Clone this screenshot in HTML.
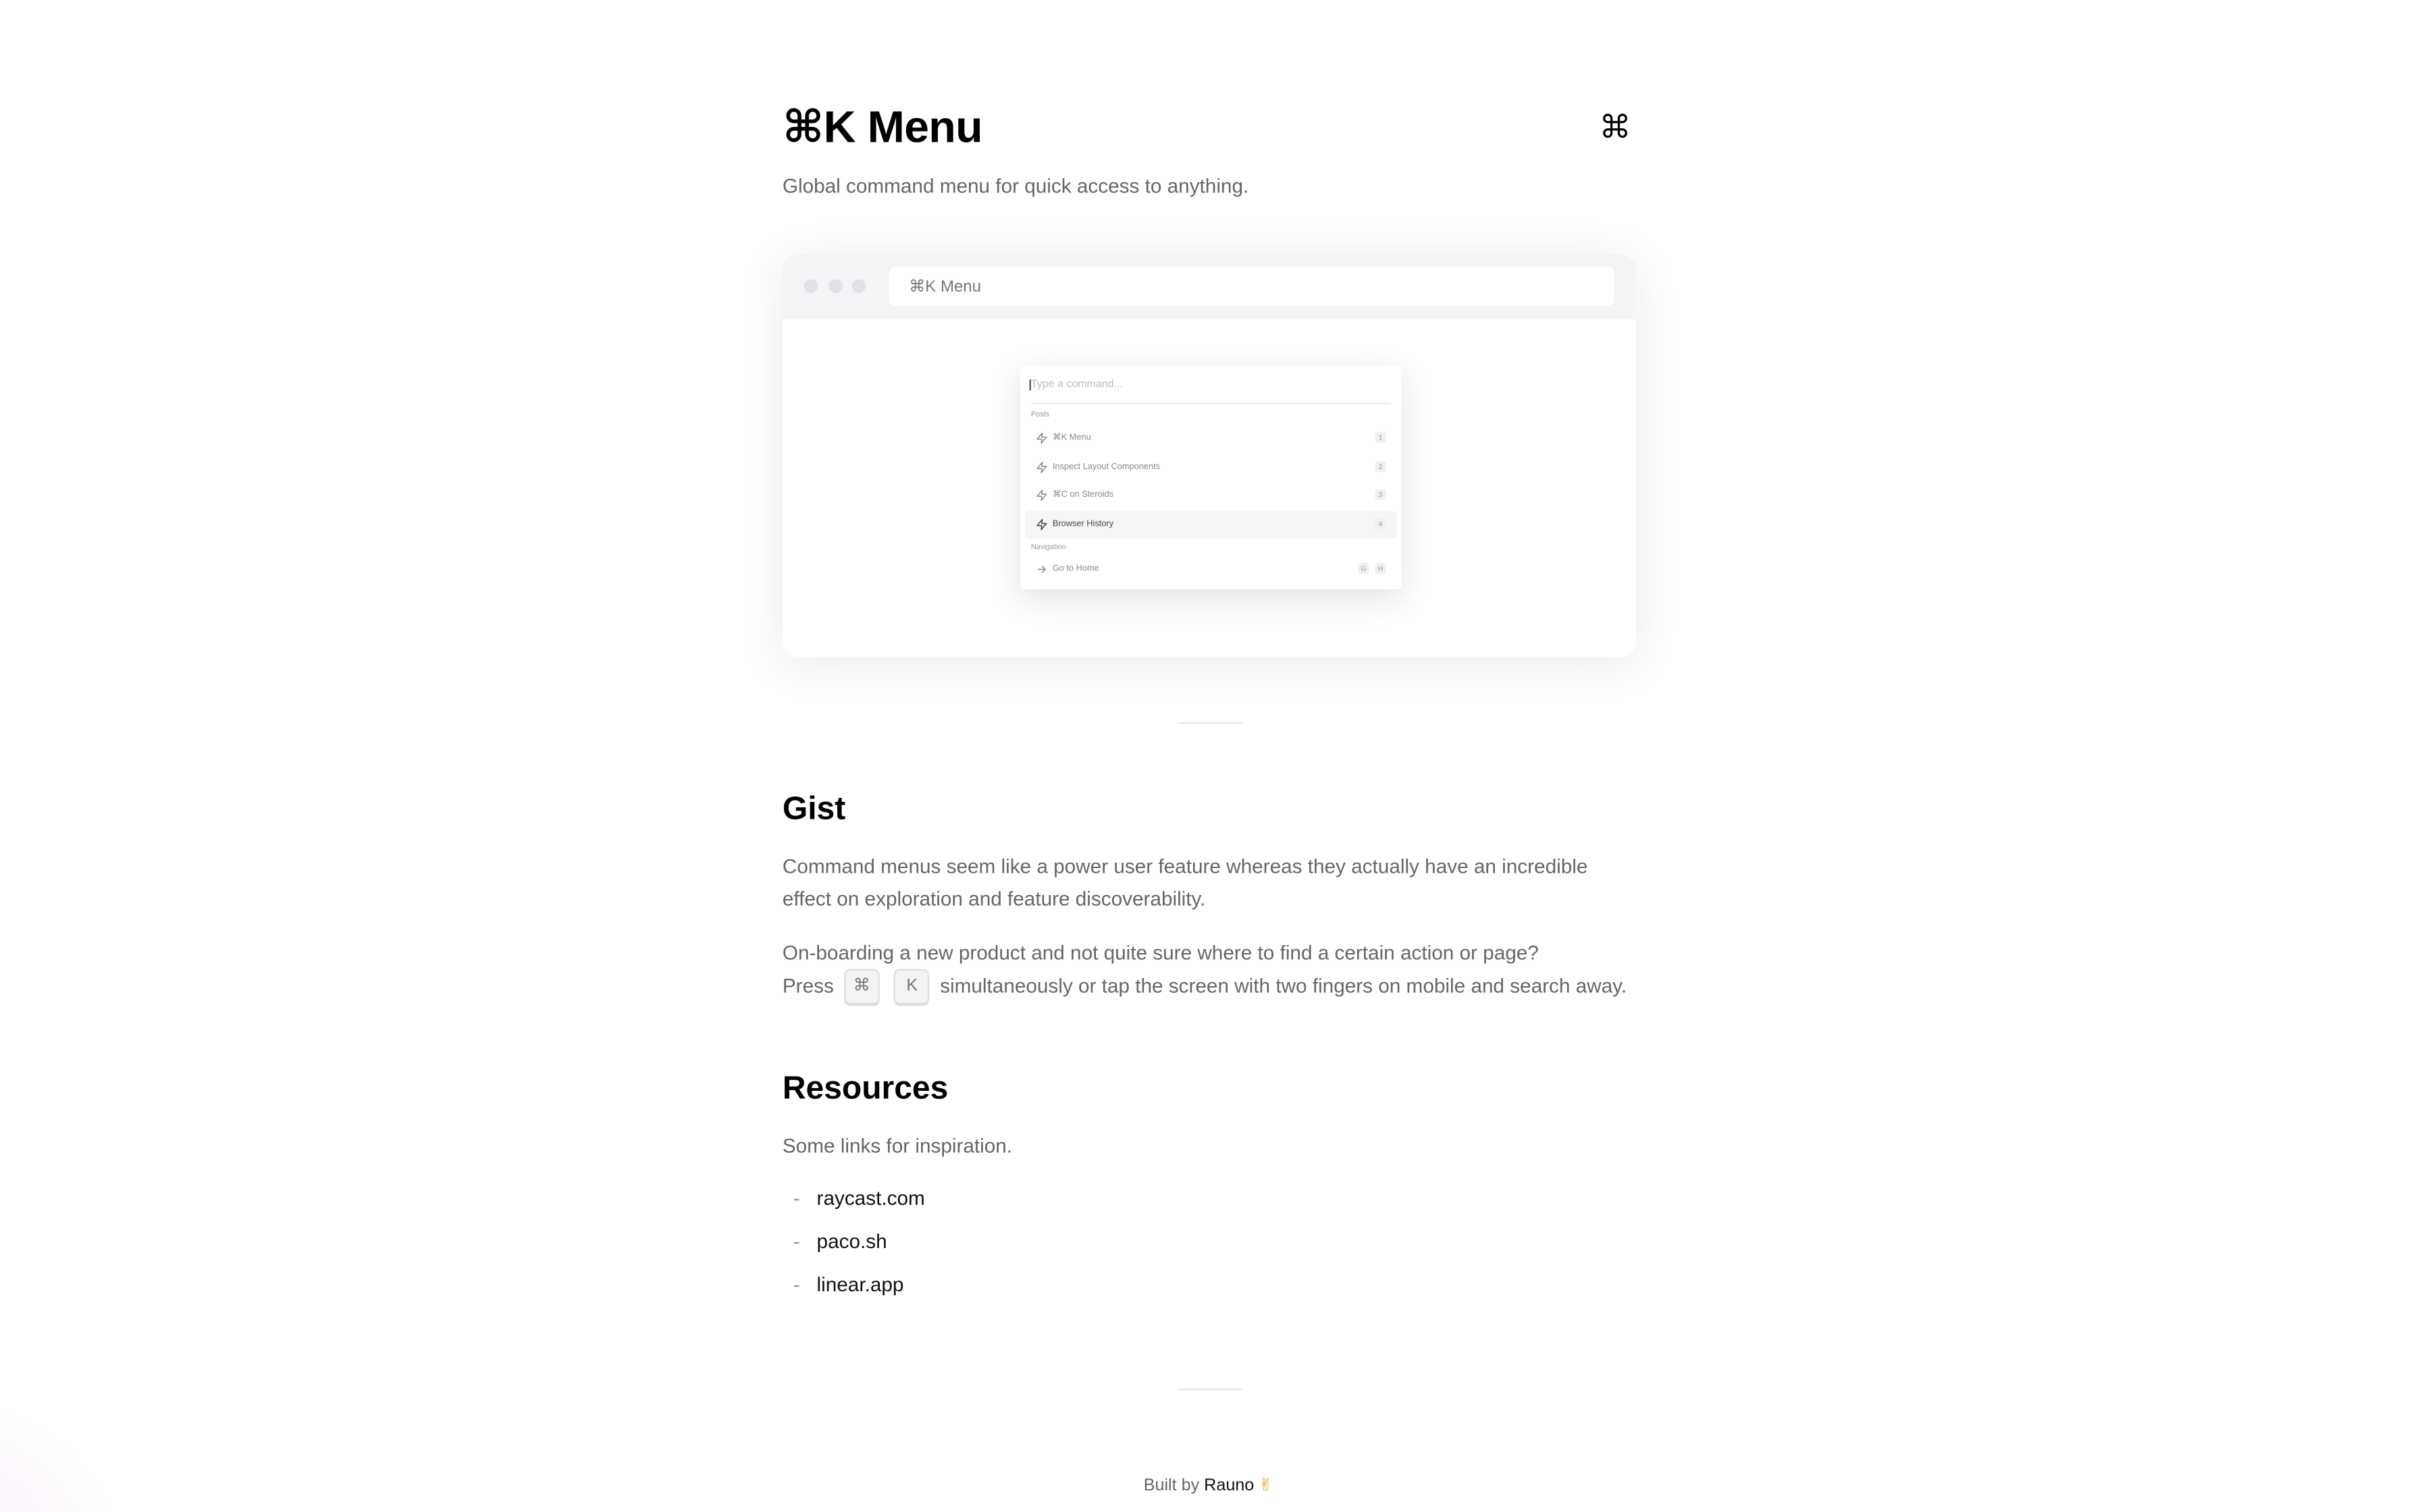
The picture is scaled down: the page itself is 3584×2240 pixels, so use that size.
<!DOCTYPE html>
<html><head><meta charset="utf-8"><style>
html,body{margin:0;padding:0;width:3584px;height:2240px;overflow:hidden;background:#fff}
#w{position:absolute;left:0;top:0;width:1568px;height:980px;transform:scale(2.285714);transform-origin:0 0;overflow:hidden;font-family:"Liberation Sans","DejaVu Sans",sans-serif;color:#666}
.a{position:absolute;white-space:nowrap}
.glow{position:absolute;left:-110px;top:880px;width:190px;height:200px;border-radius:50%;background:radial-gradient(circle at 35% 75%,rgba(250,228,250,.75),rgba(255,255,255,0) 65%)}
h1{position:absolute;left:507px;top:65px;margin:0;font-size:29px;font-weight:700;color:#000;letter-spacing:-0.3px}
.p{font-size:13px;color:#666;line-height:21px}
.frame{position:absolute;left:507px;top:165px;width:553px;height:261px;border-radius:10px;background:#fff;box-shadow:0 4px 30px rgba(0,0,0,.08);overflow:hidden}
.bar{height:42px;background:#f3f4f6;position:relative}
.dot{position:absolute;top:16px;width:9px;height:9px;border-radius:50%;background:#dfe1e5}
.url{position:absolute;left:69px;top:8px;width:470px;height:25px;background:#fff;border-radius:4px;font-size:10.5px;line-height:27px;color:#777;padding-left:13px;box-sizing:border-box}
.pal{position:absolute;left:154px;top:72px;width:247px;height:145px;background:#fff;border-radius:3px;box-shadow:0 6px 20px rgba(0,0,0,.12)}
.pal .a{font-size:5.6px;color:#888}
.it{position:absolute;left:3px;width:241px;height:18px}
.it svg{position:absolute;left:7px;top:5px}
.k{position:absolute;width:7px;height:7px;background:#eef0f2;border-radius:1.5px;font-size:4.5px;text-align:center;line-height:7px;color:#999}
.hr{position:absolute;left:763px;width:42px;height:1px;background:#e6e8ea}
h2{position:absolute;left:507px;margin:0;font-size:21px;font-weight:700;color:#000}
.kbd{display:inline-block;width:21px;height:21px;border:1px solid #ddd;border-bottom-width:2px;background:#f3f3f3;border-radius:4px;text-align:center;font-size:11px;line-height:21px;vertical-align:middle;color:#777;margin:0 3px}
.li{font-size:13px;color:#111}
.dash{color:#999}
</style></head><body><div id="w">
<div class="glow"></div>
<h1>⌘K Menu</h1>
<svg class="a" style="left:1037px;top:72px" width="19" height="19" viewBox="0 0 24 24" fill="none" stroke="#000" stroke-width="1.8" stroke-linecap="round" stroke-linejoin="round"><path d="M15 6v12a3 3 0 1 0 3-3H6a3 3 0 1 0 3 3V6a3 3 0 1 0-3 3h12a3 3 0 1 0-3-3"/></svg>
<div class="a p" style="left:507px;top:110px">Global command menu for quick access to anything.</div>

<div class="frame">
 <div class="bar">
  <div class="dot" style="left:14px"></div><div class="dot" style="left:30px"></div><div class="dot" style="left:45px"></div>
  <div class="url">⌘K Menu</div>
 </div>
 <div class="pal">
  <div class="a" style="left:6px;top:9px;font-size:7px;color:#bbb"><span style="border-left:0.6px solid #555"></span>Type a command...</div>
  <div style="position:absolute;left:7px;right:7px;top:24px;height:1px;background:#f0f0f0"></div>
  <div class="a" style="left:7px;top:30px;font-size:4.8px;color:#999">Posts</div>
  <div class="it" style="top:38px"><svg width="8" height="8" viewBox="0 0 24 24" fill="none" stroke="#888" stroke-width="2" stroke-linejoin="round"><path d="M13 2 3 14h9l-1 8 10-12h-9l1-8z"/></svg><span class="a" style="left:18px;top:6px">⌘K Menu</span><span class="k" style="left:227px;top:5px">1</span></div>
  <div class="it" style="top:57px"><svg width="8" height="8" viewBox="0 0 24 24" fill="none" stroke="#888" stroke-width="2" stroke-linejoin="round"><path d="M13 2 3 14h9l-1 8 10-12h-9l1-8z"/></svg><span class="a" style="left:18px;top:6px">Inspect Layout Components</span><span class="k" style="left:227px;top:5px">2</span></div>
  <div class="it" style="top:75px"><svg width="8" height="8" viewBox="0 0 24 24" fill="none" stroke="#888" stroke-width="2" stroke-linejoin="round"><path d="M13 2 3 14h9l-1 8 10-12h-9l1-8z"/></svg><span class="a" style="left:18px;top:6px">⌘C on Steroids</span><span class="k" style="left:227px;top:5px">3</span></div>
  <div class="it" style="top:94px;background:#f4f5f6;border-radius:3px"><svg width="8" height="8" viewBox="0 0 24 24" fill="none" stroke="#444" stroke-width="2" stroke-linejoin="round"><path d="M13 2 3 14h9l-1 8 10-12h-9l1-8z"/></svg><span class="a" style="left:18px;top:6px;color:#444">Browser History</span><span class="k" style="left:227px;top:5px">4</span></div>
  <div class="a" style="left:7px;top:116px;font-size:4.8px;color:#999">Navigation</div>
  <div class="it" style="top:123px"><svg width="8" height="8" viewBox="0 0 24 24" fill="none" stroke="#888" stroke-width="2" stroke-linecap="round" stroke-linejoin="round"><path d="M5 12h14M13 6l6 6-6 6"/></svg><span class="a" style="left:18px;top:6px">Go to Home</span><span class="k" style="left:216px;top:5px">G</span><span class="k" style="left:227px;top:5px">H</span></div>
 </div>
</div>

<div class="hr" style="top:468px"></div>
<h2 style="top:513px">Gist</h2>
<div class="a p" style="left:507px;top:551px">Command menus seem like a power user feature whereas they actually have an incredible<br>effect on exploration and feature discoverability.</div>
<div class="a p" style="left:507px;top:607px">On-boarding a new product and not quite sure where to find a certain action or page?</div>
<div class="a p" style="left:507px;top:628px">Press <span class="kbd">⌘</span> <span class="kbd">K</span> simultaneously or tap the screen with two fingers on mobile and search away.</div>

<h2 style="top:694px">Resources</h2>
<div class="a p" style="left:507px;top:732px">Some links for inspiration.</div>
<div class="a li" style="left:514px;top:769px"><span class="dash">-</span>&nbsp;&nbsp; raycast.com</div>
<div class="a li" style="left:514px;top:797px"><span class="dash">-</span>&nbsp;&nbsp; paco.sh</div>
<div class="a li" style="left:514px;top:825px"><span class="dash">-</span>&nbsp;&nbsp; linear.app</div>

<div class="hr" style="top:900px"></div>
<div class="a" style="left:741px;top:956px;font-size:11px;color:#666">Built by <span style="color:#111">Rauno</span> <span style="color:#e0a000">✌</span></div>
</div></body></html>
